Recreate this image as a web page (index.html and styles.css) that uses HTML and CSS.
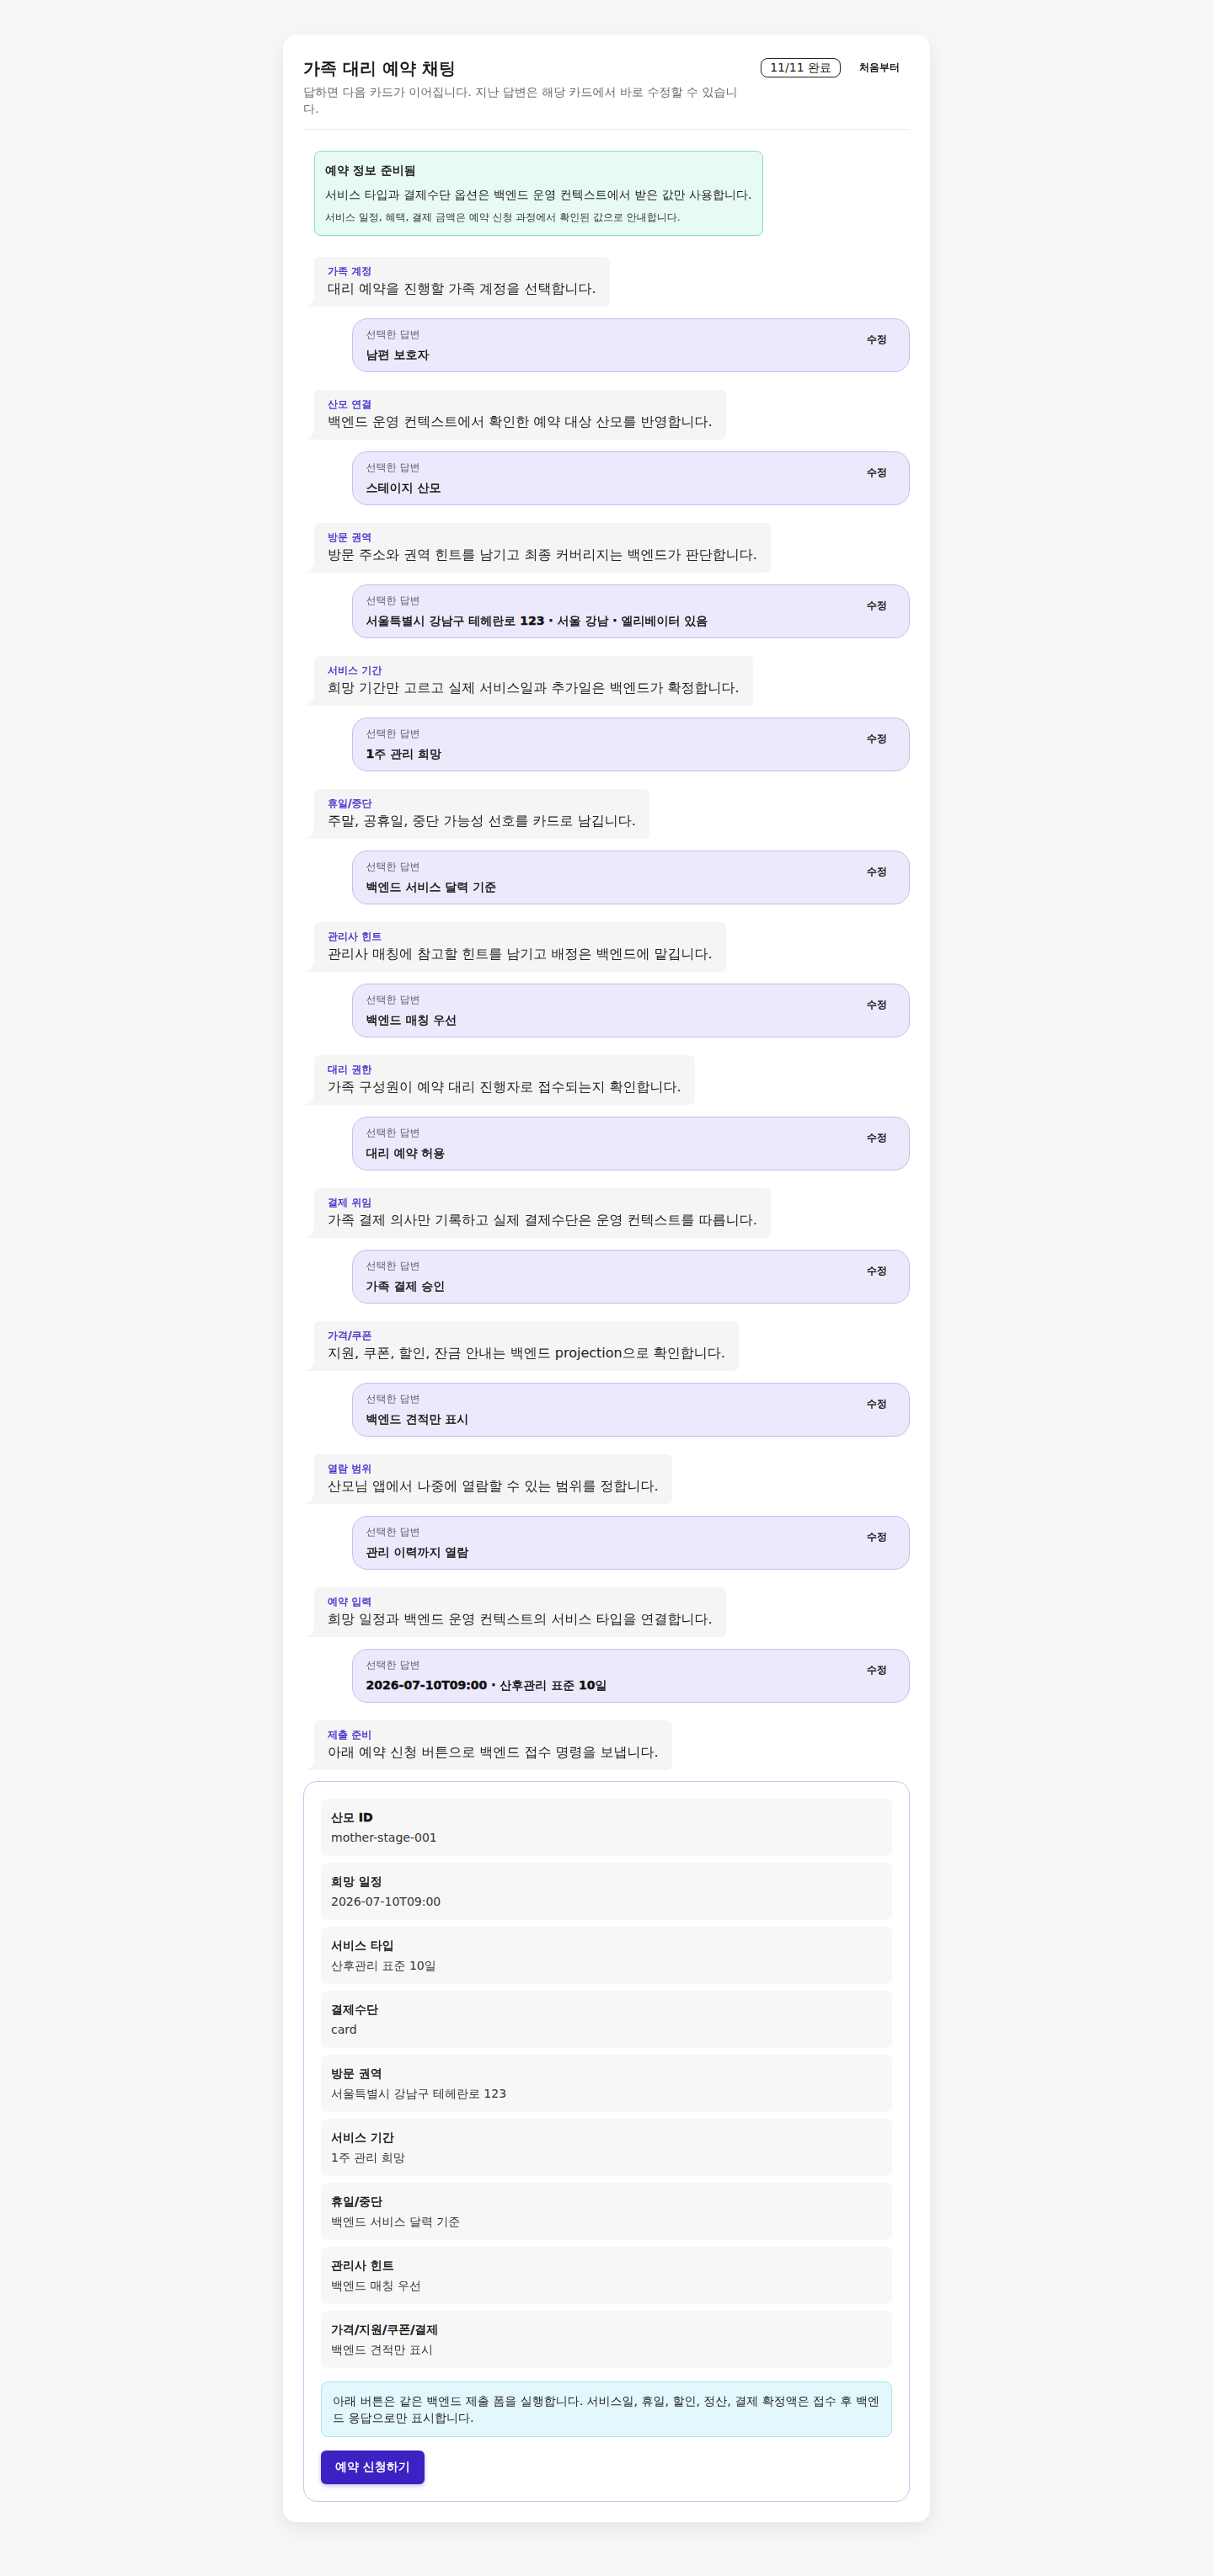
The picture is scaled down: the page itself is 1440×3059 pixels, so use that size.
FILE: index.html
```html
<!DOCTYPE html>
<html lang="ko">
<head>
  <meta charset="UTF-8">
  <meta name="viewport" content="width=device-width, initial-scale=1.0">
  <title>가족 대리 예약 채팅</title>
  <link rel="stylesheet" href="styles.css">
</head>
<body>
  <main class="chat-card">
    <header class="chat-header">
      <div class="header-text">
        <h1>가족 대리 예약 채팅</h1>
        <p>답하면 다음 카드가 이어집니다. 지난 답변은 해당 카드에서 바로 수정할 수 있습니다.</p>
      </div>
      <div class="header-actions">
        <span class="progress-badge">11/11 완료</span>
        <button class="reset-btn">처음부터</button>
      </div>
    </header>

    <section class="thread">
      <div class="ready-box">
        <strong>예약 정보 준비됨</strong>
        <p>서비스 타입과 결제수단 옵션은 백엔드 운영 컨텍스트에서 받은 값만 사용합니다.</p>
        <small>서비스 일정, 혜택, 결제 금액은 예약 신청 과정에서 확인된 값으로 안내합니다.</small>
      </div>

      <div class="bubble">
        <span class="bubble-label">가족 계정</span>
        <p>대리 예약을 진행할 가족 계정을 선택합니다.</p>
      </div>
      <div class="answer">
        <div class="answer-body">
          <span class="answer-label">선택한 답변</span>
          <strong>남편 보호자</strong>
        </div>
        <button class="edit-btn">수정</button>
      </div>

      <div class="bubble">
        <span class="bubble-label">산모 연결</span>
        <p>백엔드 운영 컨텍스트에서 확인한 예약 대상 산모를 반영합니다.</p>
      </div>
      <div class="answer">
        <div class="answer-body">
          <span class="answer-label">선택한 답변</span>
          <strong>스테이지 산모</strong>
        </div>
        <button class="edit-btn">수정</button>
      </div>

      <div class="bubble">
        <span class="bubble-label">방문 권역</span>
        <p>방문 주소와 권역 힌트를 남기고 최종 커버리지는 백엔드가 판단합니다.</p>
      </div>
      <div class="answer">
        <div class="answer-body">
          <span class="answer-label">선택한 답변</span>
          <strong>서울특별시 강남구 테헤란로 123 · 서울 강남 · 엘리베이터 있음</strong>
        </div>
        <button class="edit-btn">수정</button>
      </div>

      <div class="bubble">
        <span class="bubble-label">서비스 기간</span>
        <p>희망 기간만 고르고 실제 서비스일과 추가일은 백엔드가 확정합니다.</p>
      </div>
      <div class="answer">
        <div class="answer-body">
          <span class="answer-label">선택한 답변</span>
          <strong>1주 관리 희망</strong>
        </div>
        <button class="edit-btn">수정</button>
      </div>

      <div class="bubble">
        <span class="bubble-label">휴일/중단</span>
        <p>주말, 공휴일, 중단 가능성 선호를 카드로 남깁니다.</p>
      </div>
      <div class="answer">
        <div class="answer-body">
          <span class="answer-label">선택한 답변</span>
          <strong>백엔드 서비스 달력 기준</strong>
        </div>
        <button class="edit-btn">수정</button>
      </div>

      <div class="bubble">
        <span class="bubble-label">관리사 힌트</span>
        <p>관리사 매칭에 참고할 힌트를 남기고 배정은 백엔드에 맡깁니다.</p>
      </div>
      <div class="answer">
        <div class="answer-body">
          <span class="answer-label">선택한 답변</span>
          <strong>백엔드 매칭 우선</strong>
        </div>
        <button class="edit-btn">수정</button>
      </div>

      <div class="bubble">
        <span class="bubble-label">대리 권한</span>
        <p>가족 구성원이 예약 대리 진행자로 접수되는지 확인합니다.</p>
      </div>
      <div class="answer">
        <div class="answer-body">
          <span class="answer-label">선택한 답변</span>
          <strong>대리 예약 허용</strong>
        </div>
        <button class="edit-btn">수정</button>
      </div>

      <div class="bubble">
        <span class="bubble-label">결제 위임</span>
        <p>가족 결제 의사만 기록하고 실제 결제수단은 운영 컨텍스트를 따릅니다.</p>
      </div>
      <div class="answer">
        <div class="answer-body">
          <span class="answer-label">선택한 답변</span>
          <strong>가족 결제 승인</strong>
        </div>
        <button class="edit-btn">수정</button>
      </div>

      <div class="bubble">
        <span class="bubble-label">가격/쿠폰</span>
        <p>지원, 쿠폰, 할인, 잔금 안내는 백엔드 projection으로 확인합니다.</p>
      </div>
      <div class="answer">
        <div class="answer-body">
          <span class="answer-label">선택한 답변</span>
          <strong>백엔드 견적만 표시</strong>
        </div>
        <button class="edit-btn">수정</button>
      </div>

      <div class="bubble">
        <span class="bubble-label">열람 범위</span>
        <p>산모님 앱에서 나중에 열람할 수 있는 범위를 정합니다.</p>
      </div>
      <div class="answer">
        <div class="answer-body">
          <span class="answer-label">선택한 답변</span>
          <strong>관리 이력까지 열람</strong>
        </div>
        <button class="edit-btn">수정</button>
      </div>

      <div class="bubble">
        <span class="bubble-label">예약 입력</span>
        <p>희망 일정과 백엔드 운영 컨텍스트의 서비스 타입을 연결합니다.</p>
      </div>
      <div class="answer">
        <div class="answer-body">
          <span class="answer-label">선택한 답변</span>
          <strong>2026-07-10T09:00 · 산후관리 표준 10일</strong>
        </div>
        <button class="edit-btn">수정</button>
      </div>

      <div class="bubble">
        <span class="bubble-label">제출 준비</span>
        <p>아래 예약 신청 버튼으로 백엔드 접수 명령을 보냅니다.</p>
      </div>

      <form class="summary" onsubmit="return false">
        <dl class="summary-list">
          <div class="summary-item"><dt>산모 ID</dt><dd>mother-stage-001</dd></div>
          <div class="summary-item"><dt>희망 일정</dt><dd>2026-07-10T09:00</dd></div>
          <div class="summary-item"><dt>서비스 타입</dt><dd>산후관리 표준 10일</dd></div>
          <div class="summary-item"><dt>결제수단</dt><dd>card</dd></div>
          <div class="summary-item"><dt>방문 권역</dt><dd>서울특별시 강남구 테헤란로 123</dd></div>
          <div class="summary-item"><dt>서비스 기간</dt><dd>1주 관리 희망</dd></div>
          <div class="summary-item"><dt>휴일/중단</dt><dd>백엔드 서비스 달력 기준</dd></div>
          <div class="summary-item"><dt>관리사 힌트</dt><dd>백엔드 매칭 우선</dd></div>
          <div class="summary-item"><dt>가격/지원/쿠폰/결제</dt><dd>백엔드 견적만 표시</dd></div>
        </dl>
        <p class="submit-note">아래 버튼은 같은 백엔드 제출 폼을 실행합니다. 서비스일, 휴일, 할인, 정산, 결제 확정액은 접수 후 백엔드 응답으로만 표시합니다.</p>
        <button type="submit" class="submit-btn">예약 신청하기</button>
      </form>
    </section>
  </main>
</body>
</html>
```

FILE: styles.css
```css
body {
  margin: 0;
  padding: 41px 16px 65px;
  background-color: #f7f7f8;
  font-family: "DejaVu Sans", "WenQuanYi Zen Hei", "Noto Sans CJK KR", sans-serif;
  color: #1a1a1a;
}

button {
  font-family: inherit;
  cursor: pointer;
}

/* the hangul face has no bold cut, so thicken bold text a little */
h1,
strong,
dt,
.bubble-label,
.reset-btn,
.edit-btn,
.submit-btn {
  -webkit-text-stroke: 0.45px currentColor;
}

.chat-card {
  max-width: 768px;
  margin: 0 auto;
  padding: 24px;
  box-sizing: border-box;
  background: #fff;
  border-radius: 16px;
  box-shadow: 0 8px 24px rgba(0, 0, 0, 0.08);
}

/* Header */
.chat-header {
  display: flex;
  align-items: flex-start;
  gap: 16px;
  padding-bottom: 14px;
  border-bottom: 1px solid #ececec;
}

.header-text {
  flex: 1;
}

.header-text h1 {
  margin: 0;
  font-size: 20px;
  line-height: 32px;
  color: #111;
  -webkit-text-stroke-width: 0.6px;
}

.header-text p {
  margin: 2px 0 0;
  font-size: 14px;
  line-height: 20px;
  color: #6b6b6b;
}

.header-actions {
  display: flex;
  align-items: center;
  gap: 10px;
}

.progress-badge {
  padding: 2px 10px;
  font-size: 14px;
  line-height: 17px;
  border: 1px solid #222;
  border-radius: 8px;
  color: #222;
}

.reset-btn {
  padding: 7px 12px;
  font-size: 12px;
  line-height: 16px;
  font-weight: bold;
  border: none;
  background: transparent;
  color: #111;
}

/* Thread */
.thread {
  display: flex;
  flex-direction: column;
  align-items: flex-start;
}

.ready-box {
  margin: 25px 0 0 13px;
  padding: 12px;
  background: #e8fbf3;
  border: 1px solid #88dfbc;
  border-radius: 8px;
  box-shadow: 0 1px 2px rgba(0, 0, 0, 0.06);
}

.ready-box strong {
  display: block;
  font-size: 14px;
  line-height: 20px;
  color: #111;
}

.ready-box p {
  margin: 9px 0 0;
  font-size: 14px;
  line-height: 20px;
  color: #222;
}

.ready-box small {
  display: block;
  margin-top: 9px;
  font-size: 12px;
  line-height: 17px;
  color: #333;
}

.bubble {
  position: relative;
  margin: 21px 0 0 13px;
  padding: 9px 16px;
  background: #f5f5f6;
  border-radius: 6px 6px 6px 0;
}

.ready-box + .bubble {
  margin-top: 25px;
}

/* little tail at the lower left */
.bubble::before {
  content: '';
  position: absolute;
  left: -13px;
  bottom: 0;
  width: 13px;
  height: 13px;
  background: radial-gradient(circle at 0 0, transparent 12.5px, #f5f5f6 13px);
}

.bubble-label {
  display: block;
  font-size: 12px;
  line-height: 17px;
  font-weight: bold;
  color: #3d2cc8;
  -webkit-text-stroke-width: 0.35px;
}

.bubble p {
  margin: 0;
  font-size: 16px;
  line-height: 24px;
  color: #222;
}

.answer {
  display: flex;
  align-items: flex-start;
  justify-content: space-between;
  box-sizing: border-box;
  width: 92%;
  margin: 14px 0 0 auto;
  padding: 10px 12px 10px 16px;
  background: #ece9fc;
  border: 1px solid #c4bdf1;
  border-radius: 18px;
}

.answer-label {
  display: block;
  font-size: 12px;
  line-height: 16px;
  color: #5c5c66;
}

.answer-body strong {
  display: block;
  margin-top: 6px;
  font-size: 14px;
  line-height: 20px;
  color: #111;
}

.edit-btn {
  margin-top: 1px;
  padding: 5px 14px;
  font-size: 12px;
  line-height: 16px;
  font-weight: bold;
  border: none;
  background: transparent;
  color: #111;
}

/* Summary form */
.summary {
  align-self: stretch;
  display: flex;
  flex-direction: column;
  align-items: flex-start;
  margin-top: 13px;
  padding: 20px;
  background: #fff;
  border: 1px solid #cbc5ef;
  border-radius: 16px;
}

.summary-list {
  align-self: stretch;
  display: flex;
  flex-direction: column;
  gap: 8px;
  margin: 0;
}

.summary-item {
  padding: 12px;
  background: #f7f7f8;
  border-radius: 8px;
}

.summary-item dt {
  font-size: 14px;
  line-height: 20px;
  font-weight: bold;
  color: #111;
}

.summary-item dd {
  margin: 4px 0 0;
  font-size: 14px;
  line-height: 20px;
  color: #333;
}

.submit-note {
  align-self: stretch;
  margin: 16px 0 0;
  padding: 12px 10px 12px 13px;
  font-size: 14px;
  line-height: 20px;
  color: #222;
  background: #e3f8fc;
  border: 1px solid #a9e3f0;
  border-radius: 8px;
}

.submit-btn {
  margin-top: 16px;
  height: 40px;
  padding: 0 17px;
  font-size: 14px;
  font-weight: bold;
  color: #fff;
  background-color: #3b22c2;
  border: none;
  border-radius: 6px;
  box-shadow: 0 2px 5px rgba(59, 34, 194, 0.3);
}
```
